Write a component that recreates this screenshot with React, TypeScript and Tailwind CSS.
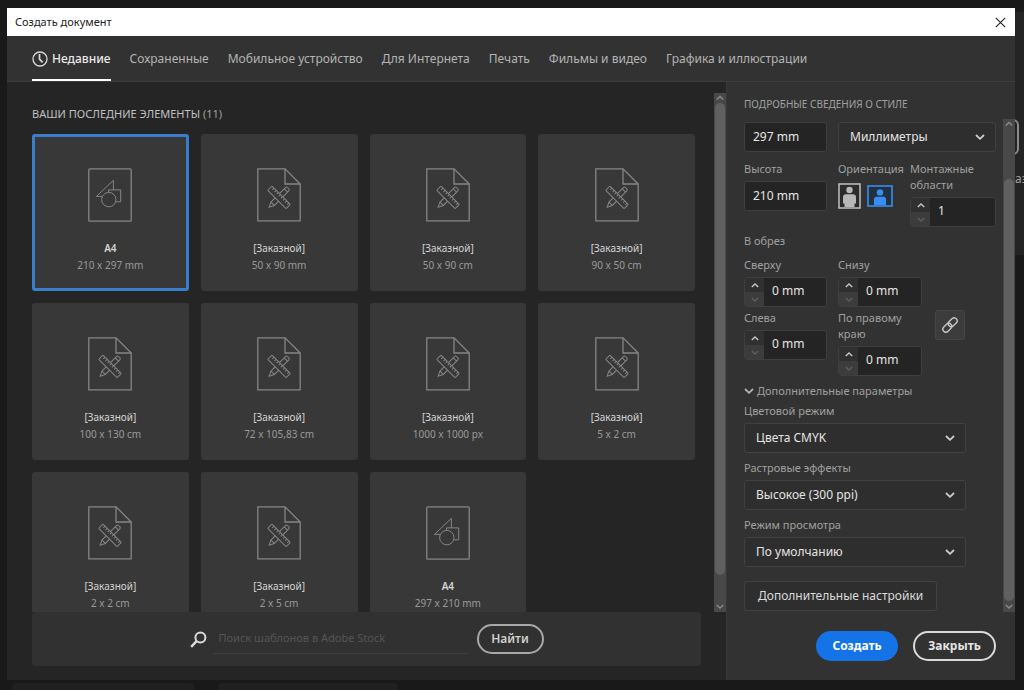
import { useState } from "react";
import type { ReactNode } from "react";
import clsx from "clsx";

interface Preset {
  name: string;
  size: string;
  kind: "art" | "custom";
}

const tabs = [
  "Сохраненные",
  "Мобильное устройство",
  "Для Интернета",
  "Печать",
  "Фильмы и видео",
  "Графика и иллюстрации",
];

const presets: Preset[] = [
  { name: "A4", size: "210 x 297 mm", kind: "art" },
  { name: "[Заказной]", size: "50 x 90 mm", kind: "custom" },
  { name: "[Заказной]", size: "50 x 90 cm", kind: "custom" },
  { name: "[Заказной]", size: "90 x 50 cm", kind: "custom" },
  { name: "[Заказной]", size: "100 x 130 cm", kind: "custom" },
  { name: "[Заказной]", size: "72 x 105,83 cm", kind: "custom" },
  { name: "[Заказной]", size: "1000 x 1000 px", kind: "custom" },
  { name: "[Заказной]", size: "5 x 2 cm", kind: "custom" },
  { name: "[Заказной]", size: "2 x 2 cm", kind: "custom" },
  { name: "[Заказной]", size: "2 x 5 cm", kind: "custom" },
  { name: "A4", size: "297 x 210 mm", kind: "art" },
];

const ArtIcon = () => (
  <svg width="44" height="54" viewBox="0 0 44 54" fill="none" stroke="#858585">
    <rect x="0.8" y="0.8" width="42.4" height="52.4" rx="1" strokeWidth="1.3" />
    <path d="M14 28.4H8.4L25.4 12.4V21.8" />
    <path d="M20.5 24.2V21.9H32.7V33.8H28" />
    <circle cx="20.8" cy="31.6" r="7.2" />
  </svg>
);

const CustomIcon = () => (
  <svg width="44" height="54" viewBox="0 0 44 54" fill="none" stroke="#858585">
    <path d="M0.8 0.8H28L43.2 16V52.8H0.8Z" strokeWidth="1.3" />
    <path d="M28 0.8V16H43.2" strokeWidth="1.3" />
    <g transform="translate(22 29.4) rotate(-45)">
      <path d="M-14 0L-9 -2.4H11.5Q13 -2.4 13 -1V1Q13 2.4 11.5 2.4H-9Z" />
      <path d="M-9 -2.4V2.4M9.8 -2.4V2.4" />
    </g>
    <g transform="translate(22 29.4) rotate(45)">
      <rect x="-13" y="-3" width="26" height="6" rx="0.8" fill="#383838" />
      <path d="M-10 -3V-0.6M-7 -3V-0.6M-4 -3V-0.6M-1 -3V-0.6M2 -3V-0.6M5 -3V-0.6M8 -3V-0.6M11 -3V-0.6" />
    </g>
  </svg>
);

const Chevron = ({ className, up }: { className?: string; up?: boolean }) => (
  <svg
    viewBox="0 0 10 6"
    fill="none"
    stroke="currentColor"
    strokeWidth="1.8"
    className={className}
    aria-hidden="true"
  >
    <path d={up ? "M1 5L5 1.2L9 5" : "M1 1L5 4.8L9 1"} />
  </svg>
);

const ScrollBar = ({ children }: { children: ReactNode }) => (
  <div className="w-3 shrink-0 bg-[#484848] text-[#8a8a8a] flex flex-col items-center">
    <Chevron up className="w-2 h-[10px] shrink-0" />
    {children}
    <Chevron className="w-2 h-[11px] shrink-0" />
  </div>
);

interface FieldProps {
  id: string;
  label: string;
  value: string;
}

const Stepper = ({ id, label, value }: FieldProps) => (
  <div className="min-w-0">
    <label htmlFor={id} className="block mb-1">
      {label}
    </label>
    <div className="flex h-[30px] rounded-[3px] border border-[#3f3f3f] bg-[#242424] overflow-hidden">
      <div className="w-[19px] shrink-0 flex flex-col">
        <button
          type="button"
          aria-label="Больше"
          className="flex-1 bg-[#303030] text-[#c4c4c4] flex justify-center items-center"
        >
          <Chevron up className="w-2 h-[5px]" />
        </button>
        <button
          type="button"
          aria-label="Меньше"
          className="flex-1 bg-[#3c3c3c] text-[#5e5e5e] flex justify-center items-center"
        >
          <Chevron className="w-2 h-[5px]" />
        </button>
      </div>
      <input
        id={id}
        defaultValue={value}
        className="w-full min-w-0 flex-1 px-2 pb-[2px] text-xs text-[#e4e4e4] outline-none"
      />
    </div>
  </div>
);

const Select = ({
  id,
  value,
  label,
}: {
  id?: string;
  value: string;
  label?: string;
}) => (
  <div className="relative">
    <select
      id={id}
      aria-label={label}
      className="appearance-none w-full h-[30px] pl-[11px] pr-8 rounded-[3px] border border-[#414141]
      bg-[#2e2e2e] text-xs text-[#e4e4e4] outline-none"
    >
      <option>{value}</option>
    </select>
    <Chevron className="absolute right-[11px] top-3 w-[10px] h-[6px] text-[#cccccc] pointer-events-none" />
  </div>
);

const LabeledSelect = ({ id, label, value }: FieldProps) => (
  <div>
    <label htmlFor={id} className="block mb-1">
      {label}
    </label>
    <Select id={id} value={value} />
  </div>
);

const StyleDetails = () => (
  <div className="flex-1 min-w-0 pt-[3px] pl-[17px] pr-[7px] overflow-hidden">
    <div className="grid grid-cols-[83px_1fr] gap-x-[11px]">
      <input
        aria-label="Ширина"
        defaultValue="297 mm"
        className="w-full h-[30px] px-2 pb-[2px] rounded-[3px] border border-[#3f3f3f] bg-[#242424] text-xs text-[#e4e4e4]"
      />
      <Select label="Единицы" value="Миллиметры" />
    </div>
    <div className="grid grid-cols-[83px_61px_1fr] gap-x-[11px] mt-[9px]">
      <div>
        <label htmlFor="height" className="block mb-1">
          Высота
        </label>
        <input
          id="height"
          defaultValue="210 mm"
          className="w-full h-[30px] px-2 pb-[2px] rounded-[3px] border border-[#3f3f3f] bg-[#242424] text-xs text-[#e4e4e4]"
        />
      </div>
      <div className="whitespace-nowrap">
        <span className="block mb-1">Ориентация</span>
        <div className="flex items-center gap-[6px] h-[30px]">
          <button type="button" aria-label="Книжная">
            <svg width="23" height="26" viewBox="0 0 23 26">
              <rect x="1" y="1" width="21" height="24" fill="#2c2c2c" stroke="#b8b8b8" strokeWidth="1.6" />
              <circle cx="11.5" cy="7" r="3.2" fill="#b8b8b8" />
              <path
                d="M8 11.2H15Q18 11.2 18 14.5V20.5H16.5V24H6.5V20.5H5V14.5Q5 11.2 8 11.2Z"
                fill="#b8b8b8"
              />
            </svg>
          </button>
          <button type="button" aria-label="Альбомная">
            <svg width="26" height="22" viewBox="0 0 26 22">
              <rect x="1" y="1" width="24" height="20" fill="#23303f" stroke="#378ef0" strokeWidth="1.6" />
              <circle cx="13" cy="7.4" r="3.2" fill="#378ef0" />
              <path d="M9.5 11.8H16.5Q19 11.8 19 14.5V20H7V14.5Q7 11.8 9.5 11.8Z" fill="#378ef0" />
            </svg>
          </button>
        </div>
      </div>
      <Stepper id="artboards" label="Монтажные области" value="1" />
    </div>
    <p className="mt-[6px]">В обрез</p>
    <div className="grid grid-cols-[83px_84px_30px] gap-x-[11px] mt-2">
      <div className="flex flex-col gap-[3px]">
        <Stepper id="top" label="Сверху" value="0 mm" />
        <Stepper id="left" label="Слева" value="0 mm" />
      </div>
      <div className="flex flex-col gap-[3px]">
        <Stepper id="bottom" label="Снизу" value="0 mm" />
        <Stepper id="right" label="По правому краю" value="0 mm" />
      </div>
      <button
        type="button"
        aria-label="Связать"
        className="self-center size-[30px] ml-[2px] mt-4 rounded-[3px] border border-[#464646] bg-[#3c3c3c] flex justify-center items-center"
      >
        <svg width="16" height="16" viewBox="0 0 16 16" fill="none" stroke="#c6c6c6" strokeWidth="1.4">
          <g transform="rotate(-45 8 8)">
            <rect x="-0.8" y="5" width="10" height="6" rx="3" />
            <rect x="6.8" y="5" width="10" height="6" rx="3" />
          </g>
        </svg>
      </button>
    </div>
    <button type="button" className="flex items-center gap-[3px] mt-[7px] whitespace-nowrap">
      <Chevron className="w-[10px] h-[6px] text-[#b4b4b4]" />
      Дополнительные параметры
    </button>
    <div className="flex flex-col gap-[7px] mt-1 mr-[30px]">
      <LabeledSelect id="color" label="Цветовой режим" value="Цвета CMYK" />
      <LabeledSelect id="raster" label="Растровые эффекты" value="Высокое (300 ppi)" />
      <LabeledSelect id="preview" label="Режим просмотра" value="По умолчанию" />
    </div>
    <button
      type="button"
      className="mt-[14px] h-[30px] px-[13px] rounded-[3px] border border-[#414141] bg-[#2e2e2e]
      text-xs text-[#dadada] whitespace-nowrap"
    >
      Дополнительные настройки
    </button>
  </div>
);

// the dimmed application window behind the dialog
const Backdrop = () => (
  <div className="absolute inset-0 flex flex-col bg-[#191919]" aria-hidden="true">
    <div className="h-3 shrink-0"></div>
    <div className="h-[243px] shrink-0 self-end w-9 bg-[#242424] overflow-hidden">
      <div className="mt-[107px] mr-[5px] h-9 rounded-md border-2 border-[#8a8a8a]"></div>
      <div className="mt-4 pl-[27px] text-xs text-[#a0a0a0]">аз</div>
    </div>
    <div className="mt-auto h-[7px] pl-3 flex gap-6">
      <div className="w-[182px] rounded-t bg-[#202020]"></div>
      <div className="w-[180px] rounded-t bg-[#202020]"></div>
    </div>
  </div>
);

const App = () => {
  const [selected, setSelected] = useState(0);

  return (
    <div className="relative h-screen min-h-[690px] flex pt-2 pb-[10px] pl-[7px] pr-[9px] font-['Noto_Sans',sans-serif]">
      <Backdrop />
      <div
        role="dialog"
        aria-labelledby="dialog-title"
        className="relative flex-1 min-w-0 flex flex-col bg-[#323232]"
      >
        <header className="h-7 shrink-0 pl-2 pr-[9px] flex justify-between items-center bg-white">
          <h1 id="dialog-title" className="text-[11px] text-[#1c1c1c]">
            Создать документ
          </h1>
          <button type="button" aria-label="Закрыть окно">
            <svg width="11" height="11" viewBox="0 0 11 11" stroke="#222" strokeWidth="1.1">
              <path d="M0.8 0.8L10.2 10.2M10.2 0.8L0.8 10.2" />
            </svg>
          </button>
        </header>
        <nav
          className="h-[46px] shrink-0 pl-[25px] flex gap-[19px] border-b border-[#3c3c3c]
        text-xs text-[#b4b4b4] whitespace-nowrap"
        >
          <button
            type="button"
            className="flex items-center gap-1 pt-[2px] font-medium text-[#e8e8e8] border-b-2 border-white"
          >
            <svg width="16" height="16" viewBox="0 0 16 16" fill="none" stroke="#d8d8d8">
              <circle cx="8" cy="8" r="7" strokeWidth="1.3" />
              <path d="M7.5 3V8.2L10.6 11.4" strokeWidth="1.7" />
            </svg>
            Недавние
          </button>
          {tabs.map((tab) => (
            <button key={tab} type="button">
              {tab}
            </button>
          ))}
        </nav>
        <div className="flex-1 min-h-0 flex">
          <main className="flex-1 min-w-0 flex flex-col bg-[#252525]">
            <div className="flex-1 min-h-0 flex">
              <section className="flex-1 min-w-0 pl-[25px] pr-[19px] overflow-hidden">
                <h2 className="mt-6 mb-3 text-[11px] leading-4 text-[#c0c0c0]">
                  ВАШИ ПОСЛЕДНИЕ ЭЛЕМЕНТЫ{" "}
                  <span className="text-[#a0a0a0]">(11)</span>
                </h2>
                <div className="grid grid-cols-4 gap-3">
                  {presets.map((preset, i) => (
                    <button
                      key={i}
                      type="button"
                      onClick={() => setSelected(i)}
                      className={clsx(
                        "aspect-square flex flex-col items-center pt-[31px] rounded-[3px] border-3 bg-[#383838] text-[10px] leading-[17px]",
                        i === selected ? "border-[#3a7dcd]" : "border-[#383838]"
                      )}
                    >
                      {preset.kind === "art" ? <ArtIcon /> : <CustomIcon />}
                      <span
                        className={clsx(
                          "mt-[18px] text-[#d4d4d4]",
                          preset.kind === "art" && "font-semibold"
                        )}
                      >
                        {preset.name}
                      </span>
                      <span className="text-[#9a9a9a]">{preset.size}</span>
                    </button>
                  ))}
                </div>
              </section>
              <div className="flex pt-[11px]">
                <ScrollBar>
                  <div className="w-[10px] h-[472px] mb-auto rounded-full bg-[#606060]"></div>
                </ScrollBar>
              </div>
            </div>
            <form
              className="h-[54px] shrink-0 ml-[25px] mr-[25px] mb-[14px] rounded bg-[#313131] flex justify-center items-center"
              onSubmit={(e) => e.preventDefault()}
            >
              <svg width="17" height="17" viewBox="0 0 17 17" fill="none" stroke="#dcdcdc" strokeWidth="2">
                <circle cx="10.4" cy="6.4" r="5" />
                <path d="M6.6 10.2L1.2 15.8" strokeWidth="2.4" />
              </svg>
              <input
                aria-label="Поиск шаблонов"
                placeholder="Поиск шаблонов в Adobe Stock"
                className="w-[255px] h-[30px] ml-[6px] mr-[9px] px-[6px] pb-[2px] border-b border-[#3f3f3f] text-[11px] text-[#d4d4d4] placeholder:text-[#555555] outline-none"
              />
              <button
                type="submit"
                className="h-[30px] w-[67px] rounded-full border-2 border-[#a8a8a8] text-xs font-semibold text-[#cfcfcf]"
              >
                Найти
              </button>
            </form>
          </main>
          <aside className="w-[289px] shrink-0 flex flex-col border-l border-[#383838] text-[11px] leading-4 text-[#a0a0a0]">
            <h2 className="mt-[14px] mb-[7px] pl-[17px] text-[10px] leading-4">
              ПОДРОБНЫЕ СВЕДЕНИЯ О СТИЛЕ
            </h2>
            <div className="flex-1 min-h-0 flex">
              <StyleDetails />
              <ScrollBar>
                <div className="w-[10px] h-[422px] mt-auto rounded-full bg-[#606060]"></div>
              </ScrollBar>
            </div>
            <footer className="h-[68px] pr-[19px] flex justify-end items-center gap-[15px] text-xs font-bold">
              <button type="button" className="h-[30px] w-[82px] rounded-full bg-[#1473e6] text-white">
                Создать
              </button>
              <button
                type="button"
                className="h-[30px] w-[83px] rounded-full border-2 border-[#dadada] text-[#e4e4e4]"
              >
                Закрыть
              </button>
            </footer>
          </aside>
        </div>
      </div>
    </div>
  );
};
export default App;
